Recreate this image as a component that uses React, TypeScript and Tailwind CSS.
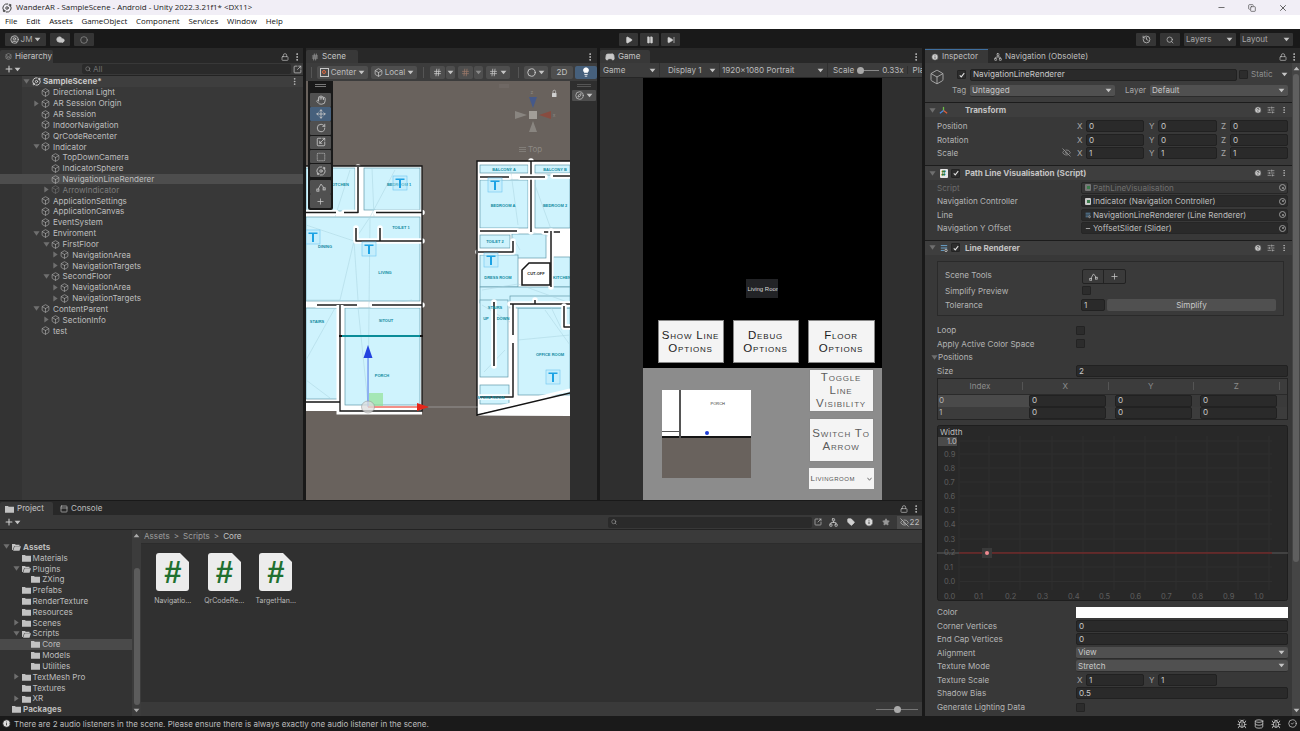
import React from "react";
import {
  Box, Hand, Move, RotateCw, Scaling, SquareDashed, Lock, EllipsisVertical, Plus, Cloud, CircleUser, Play, Pause, SkipForward,
  History, Search, Minus, X, Copy, CircleHelp, SlidersHorizontal, Star, Tag, Bug, EyeOff, Lightbulb, Compass, Gamepad2, Info,
  Network, Hash, Circle, Orbit, CircleCheck, Layers, Database, SquareArrowOutUpRight, PanelTop,
} from "lucide-react";

const Tri = ({ open = false, cls = "" }: { open?: boolean; cls?: string }) => (
  <svg width="7" height="7" viewBox="0 0 8 8" className={"shrink-0 " + cls}>
    {open ? <path d="M0.5 1.5 H7.5 L4 6.5 Z" fill="#6f6f6f" /> : <path d="M1.5 0.5 V7.5 L6.5 4 Z" fill="#6f6f6f" />}
  </svg>
);

const Down = ({ c = "#c4c4c4", cls = "" }: { c?: string; cls?: string }) => (
  <svg width="7" height="5" viewBox="0 0 8 6" className={"shrink-0 " + cls}><path d="M0.5 1 H7.5 L4 5 Z" fill={c} /></svg>
);

const Dots = () => <EllipsisVertical size={10} color="#c4c4c4" strokeWidth={2.2} />;

const Peak = ({ s = 10 }: { s?: number }) => (
  <svg width={s} height={s} viewBox="0 0 12 12" fill="none" stroke="#c8c8c8" strokeWidth="1">
    <path d="M2.500 8.500 L6 2.500 L9.500 7" />
    <rect x="1" y="8.500" width="2.500" height="2.500" />
    <rect x="8.500" y="7" width="2.500" height="2.500" />
  </svg>
);

const FolderIco = ({ open = false }: { open?: boolean }) => (
  <svg width="9" height="8" viewBox="0 0 12 10" className="shrink-0">
    {open ? (
      <path d="M0 1 H4 L5 2 H10 V3.500 H3 L1 9 H0 Z M3.500 4 H12 L10 10 H1.500 Z" fill="#c2c2c2" />
    ) : (
      <path d="M0 1 H4 L5 2 H12 V10 H0 Z" fill="#c2c2c2" />
    )}
  </svg>
);

const Tab = ({ w, children }: { w: string; children: React.ReactNode }) => (
  <div className={"h-[13px] bg-[#383838] rounded-t-[2px] flex items-center gap-[3px] pl-[5px] text-[#c4c4c4] shrink-0 " + w}>{children}</div>
);

const hier: [string, number, "o" | "c" | "", boolean?, boolean?][] = [
  ["Directional Light", 1, ""], ["AR Session Origin", 1, "c"], ["AR Session", 1, ""], ["IndoorNavigation", 1, ""],
  ["QrCodeRecenter", 1, ""], ["Indicator", 1, "o"], ["TopDownCamera", 2, ""], ["IndicatorSphere", 2, ""],
  ["NavigationLineRenderer", 2, "", true], ["ArrowIndicator", 2, "c", false, true], ["ApplicationSettings", 1, ""],
  ["ApplicationCanvas", 1, ""], ["EventSystem", 1, ""], ["Enviroment", 1, "o"], ["FirstFloor", 2, "o"],
  ["NavigationArea", 3, "c"], ["NavigationTargets", 3, "c"], ["SecondFloor", 2, "o"], ["NavigationArea", 3, "c"],
  ["NavigationTargets", 3, "c"], ["ContentParent", 1, "o"], ["SectionInfo", 2, "c"], ["test", 1, ""],
];

const Hierarchy = () => (
  <section className="w-[303px] shrink-0 bg-[#383838] flex flex-col mr-[3px]">
    <div className="h-[15px] bg-[#282828] flex items-end shrink-0">
      <Tab w="w-[53px]"><Layers size={7} color="#a0a0a0" /><span>Hierarchy</span></Tab>
      <div className="ml-auto h-[13px] flex items-center gap-[3px] pr-[1px]"><Lock size={8} color="#c4c4c4" /><Dots /></div>
    </div>
    <div className="h-[13px] flex items-center pl-[4px] pr-[1px] border-b border-[#232323] shrink-0">
      <Plus size={10} color="#d0d0d0" strokeWidth={2.5} /><Down />
      <div className="ml-[61px] flex-1 h-[10px] bg-[#2a2a2a] rounded-[2px] flex items-center pl-[3px] gap-[2px] text-[#6f6f6f]">
        <Search size={6} color="#9a9a9a" /><span>All</span>
      </div>
      <SquareArrowOutUpRight size={9} color="#c4c4c4" className="ml-[2px]" />
    </div>
    <div className="flex-1 flex overflow-hidden">
      <div className="w-[22px] bg-[#333333] shrink-0" />
      <div className="flex-1 flex flex-col">
        <div className="h-[10.830px] bg-[#3e3e3e] flex items-center pl-[1px] gap-[2px] font-bold text-[#c8c8c8] pr-[4px] mb-[0.2px]">
          <Tri open /><Orbit size={9} color="#d8d8d8" strokeWidth={2.4} /><span>SampleScene*</span>
          <span className="ml-auto"><EllipsisVertical size={9} color="#c4c4c4" /></span>
        </div>
        {hier.map(([n, d, a, sel, dim], i) => (
          <div key={i} className={"h-[10.830px] flex items-center shrink-0 " + (sel ? "bg-[#4d4d4d] -ml-[22px] " : "")}
            style={{ paddingLeft: (sel ? 22 : 0) + (d - 1) * 9.6 + 11 }}>
            <span className="w-[8px] shrink-0 flex">{a ? <Tri open={a === "o"} /> : null}</span>
            <Box size={9} strokeWidth={1.4} color={dim ? "#7f7f7f" : "#c8c8c8"} className="shrink-0 mr-[3px]" />
            <span className={dim ? "text-[#7d7d7d]" : "text-[#bdbdbd]"}>{n}</span>
          </div>
        ))}
      </div>
    </div>
  </section>
);

const Wall = ({ d, w = 1.5 }: { d: string; w?: number }) => (
  <g fill="none" strokeLinecap="round" strokeLinejoin="round">
    <path d={d} stroke="#ffffff" strokeWidth={w + 4} />
    <path d={d} stroke="#1c1c1c" strokeWidth={w} strokeLinecap="butt" />
  </g>
);

const TMark = ({ x, y }: { x: number; y: number }) => (
  <g>
    <rect x={x - 7} y={y - 7} width="14" height="14" fill="#b8e8fb" fillOpacity=".45" stroke="#6ec6f2" strokeWidth=".6" />
    <path d={`M${x - 4.5} ${y - 4.5} H${x + 4.5} V${y - 3} H${x + 1} V${y + 5} H${x - 1} V${y - 3} H${x - 4.5} Z`} fill="#1ba2e4" />
  </g>
);

const rooms: [number, number, number, number][] = [
  [306, 168, 355, 211], [364, 168, 420, 210], [306, 217, 420, 301], [306, 308, 338, 399], [345, 308, 420, 405],
  [480, 165, 528, 173], [535, 165, 570, 173], [480, 180, 528, 228], [535, 175, 570, 228], [480, 235, 510, 248],
  [512, 234, 546, 258], [480, 255, 518, 287], [553, 257, 570, 287], [480, 287, 570, 303], [480, 300, 508, 377],
  [518, 308, 570, 395], [480, 385, 509, 404], [510, 296, 570, 308],
];

const labels: [string, number, number][] = [
  ["KITCHEN", 340, 186], ["BEDROOM 1", 399, 186], ["TOILET 1", 401, 229], ["DINING", 325, 248], ["LIVING", 385, 274],
  ["STAIRS", 317, 323], ["SITOUT", 386, 322], ["PORCH", 382, 377], ["BALCONY A", 504, 171], ["BALCONY B", 555, 171],
  ["BEDROOM A", 503, 207], ["BEDROOM 2", 555, 207], ["TOILET 2", 495, 243], ["CUT-OFF", 536, 275], ["DRESS ROOM", 498, 279],
  ["KITCHEN", 562, 279], ["STAIRS", 495, 309], ["UP", 486, 320], ["DOWN", 503, 320], ["OFFICE ROOM", 550, 356], ["STORE ROOM", 491, 399],
];

const FloorPlan = () => (
  <svg viewBox="306 81 264 419" className="w-full h-full block">
    <rect x="306" y="81" width="264" height="419" fill="#69625d" />
    <rect x="306" y="166" width="116" height="245" fill="#fff" />
    <rect x="477" y="161" width="93" height="255" fill="#fff" />
    <path d="M477 416 L570 393 V416 Z" fill="#fff" />
    <path d="M477 415.500 V420 H570 V416 Z" fill="#69625d" />
    {rooms.map(([a, b, c, d], i) => (
      <rect key={i} x={a} y={b} width={c - a} height={d - b} fill="#cff3fd" stroke="#5f98a8" strokeWidth=".7" />
    ))}
    <g stroke="#a9d3df" strokeWidth=".5" fill="none">
      <path d="M306 225 L354 241 L370 217 L368 404 M354 241 L340 300 M354 241 L358 300 M395 170 L370 217 M372 168 L374 217 M350 170 L335 217 M306 300 L340 300 M412 300 L370 307 M358 307 L368 404 M306 380 L330 398 M306 360 L335 308" />
      <path d="M510 165 L518 225 M530 232 L548 236 M482 290 L518 284 L570 303 M482 305 L510 322 M550 305 L562 330 M518 340 L570 335 M545 310 L570 345 M484 372 L505 350 M510 232 L520 250 M535 185 L552 232" />
    </g>
    <Wall d="M306 212.500 H336 M344 212.500 H358 V167 M376 212.500 H422" />
    <Wall d="M356 228 V241 H422 M380 228 V241" />
    <Wall d="M317 305 H357 M372 305 H422" />
    <path d="M340 305 V411 H422" stroke="#fff" strokeWidth="7" fill="none" />
    <rect x="306" y="402" width="34" height="8.500" fill="#fff" />
    <path d="M340 305 V411 H422 V166 H306 M306 402 H340" stroke="#141414" strokeWidth="1.300" fill="none" />
    <path d="M341 336 H421" stroke="#0b8c98" strokeWidth="2" />
    <path d="M339 336 H342 M420 336 H423" stroke="#111" strokeWidth="2" />
    <Wall d="M480 231 H517 M531 161 V232 M544 232 H560" />
    <Wall d="M480 177 H509 M520 177 H545 M553 176 H570" />
    <Wall d="M551 231 V287 M513 241 V252 H478" />
    <Wall d="M535 304 V300 M510 304 H570 M513 304 V335 M513 343 V397 H480" />
    <Wall d="M494 302 V366" w={1.600} />
    <Wall d="M564 306 V327 H570" />
    <path d="M522 270 L529 263 H550 V285 H522 Z" fill="#fff" stroke="#161616" strokeWidth="1.500" />
    <path d="M477 416 V161 H570 M477 415 L570 393" stroke="#141414" strokeWidth="1.400" fill="none" />
    <path d="M482 411 L570 390" stroke="#fff" strokeWidth="3" />
    <g fontFamily="'Liberation Sans',sans-serif" fontSize="4" fontWeight="700" textAnchor="middle">
      {labels.map(([t, x, y], i) => (
        <text key={i} x={x} y={y} fill={t === "CUT-OFF" ? "#222" : "#0f8aa0"}>{t}</text>
      ))}
    </g>
    <TMark x={400} y={183} /><TMark x={313} y={237} /><TMark x={369} y={249} />
    <TMark x={495} y={185} /><TMark x={491} y={260} /><TMark x={553} y={377} />
    <rect x="369" y="393" width="14" height="13" fill="#8fe08f" fillOpacity=".65" />
    <path d="M428 407 H478" stroke="#a9a9a9" strokeWidth=".7" />
    <path d="M368 407 V350" stroke="#5878f0" strokeWidth="1" />
    <path d="M368 345 L372.500 358 H363.500 Z" fill="#2343e0" />
    <path d="M368 407 H418" stroke="#ef6a5f" strokeWidth="1.400" />
    <path d="M429 407 L417 403 V411 Z" fill="#e5261a" />
    <ellipse cx="368" cy="407" rx="6.500" ry="6" fill="#dcdcdc" fillOpacity=".75" stroke="#8b8b8b" strokeWidth=".5" />
    <path d="M499 85 H509 M499 87 H509" stroke="#7b7672" strokeWidth=".7" />
    <g fillOpacity=".9">
      <path d="M533 108 L529 97 H537 Z" fill="#41598f" />
      <path d="M539 115 L551 111 V119 Z" fill="#8c4a3d" />
      <path d="M527 115 L515 111 V119 Z" fill="#8d8a84" />
      <path d="M533 121 L529 132 H537 Z" fill="#8d8a84" />
      <rect x="529" y="111" width="8" height="8" fill="#a8a59f" />
    </g>
    <text x="532" y="94" fontSize="5" fill="#8d8984" textAnchor="middle" fontFamily="Inter">z</text>
    <text x="554" y="117" fontSize="5" fill="#8d8984" textAnchor="middle" fontFamily="Inter">x</text>
    <rect x="552" y="93" width="4.500" height="4" rx=".5" fill="#cfcfcf" />
    <path d="M553 93 V91.500 A1.300 1.300 0 0 1 555.600 91.500 V93" stroke="#cfcfcf" strokeWidth=".7" fill="none" />
    <text x="528" y="152" fontSize="8" fill="#8d8984" fontFamily="Inter">Top</text>
    <path d="M519 147.500 H526 M519 149.500 H526 M519 151.500 H526" stroke="#8d8984" strokeWidth=".7" />
  </svg>
);

const SBtn = ({ w, children, active }: { w: string; children?: React.ReactNode; active?: boolean }) => (
  <div className={"h-[13px] flex items-center justify-center gap-[2px] rounded-[2px] shrink-0 " + w + (active ? " bg-[#46607c]" : " bg-[#4e4e4e]")}>{children}</div>
);

const Sep = () => <div className="w-[1px] h-[11px] bg-[#232323] border-r border-[#555] shrink-0" />;

const tools = [Hand, Move, RotateCw, Scaling, SquareDashed, Orbit];

const Scene = () => (
  <section className="w-[291px] shrink-0 bg-[#282828] flex flex-col mr-[3px]">
    <div className="h-[15px] flex items-end shrink-0">
      <Tab w="w-[52px]"><Hash size={8} color="#b0b0b0" /><span>Scene</span></Tab>
      <div className="ml-auto h-[13px] flex items-center pr-[2px]"><Dots /></div>
    </div>
    <div className="h-[18px] bg-[#3c3c3c] flex items-center pl-[5px] shrink-0">
      <Sep />
      <div className="ml-[5px] flex items-center gap-[3px]">
        <SBtn w="w-[51px]"><span className="w-[9px] h-[9px] border border-[#c8c8c8] flex items-center justify-center"><span className="w-[4px] h-[4px] rounded-full border border-[#e0683e]" /></span><span className="text-[#bdbdbd]">Center</span><Down /></SBtn>
        <SBtn w="w-[46px]"><Box size={9} color="#c8c8c8" /><span className="text-[#bdbdbd]">Local</span><Down /></SBtn>
      </div>
      <div className="ml-[6px] mr-[6px]"><Sep /></div>
      <div className="flex items-center gap-[1px]">
        <SBtn w="w-[15px]"><Hash size={9} color="#d0d0d0" /></SBtn><SBtn w="w-[9px]"><Down /></SBtn>
      </div>
      <div className="flex items-center gap-[1px] ml-[3px]">
        <SBtn w="w-[15px]"><Hash size={9} color="#9c7a6a" /></SBtn><SBtn w="w-[9px]"><Down c="#8a8a8a" /></SBtn>
      </div>
      <div className="ml-[3px]"><SBtn w="w-[24px]"><Hash size={9} color="#c8c8c8" /><Down /></SBtn></div>
      <div className="ml-[8px] mr-[5px]"><Sep /></div>
      <SBtn w="w-[24px]"><Circle size={9} color="#d0d0d0" strokeWidth={2.4} /><Down /></SBtn>
      <div className="ml-[3px]"><SBtn w="w-[22px]"><span className="text-[#c4c4c4]">2D</span></SBtn></div>
      <div className="ml-[2px]"><SBtn w="w-[22px]" active><Lightbulb size={10} color="#fff" fill="#fff" /></SBtn></div>
    </div>
    <div className="flex-1 flex relative overflow-hidden">
      <div className="w-[264px] shrink-0"><FloorPlan /></div>
      <div className="flex-1 bg-[#2e2e2e] flex flex-col items-center pt-[3px]">
        <div className="w-[14px] h-[3px] border-y border-[#555]" />
        <div className="mt-[3px] w-[24px] h-[11px] bg-[#4e4e4e] rounded-[1px] flex items-center justify-center gap-[2px]"><Compass size={9} color="#c4c4c4" /><Down /></div>
      </div>
      <div className="absolute left-[2px] top-0 w-[25px] h-[129px] bg-[#191919] rounded-b-[2px] flex flex-col items-center px-[2px] pt-[3px]">
        <div className="w-[11px] h-[3px] border-y border-[#777] mb-[6px] shrink-0" />
        {tools.map((I, i) => (
          <div key={i} className={"w-[21px] h-[13.500px] mb-[0.7px] rounded-[1px] flex items-center justify-center shrink-0 " + (i === 1 ? "bg-[#46607c]" : "bg-[#505050]")}>
            <I size={10} color="#c8c8c8" />
          </div>
        ))}
        <div className="w-[21px] h-[13.500px] mt-[2px] mb-[0.7px] rounded-[1px] bg-[#505050] flex items-center justify-center shrink-0"><Peak /></div>
        <div className="w-[21px] h-[13.500px] rounded-[1px] bg-[#505050] flex items-center justify-center shrink-0"><Plus size={9} color="#c8c8c8" /></div>
      </div>
    </div>
  </section>
);

const GBtn = ({ t, c = "text-[#1c1c1c]", h = "h-[43px]", w = "w-[66px]" }: { t: string; c?: string; h?: string; w?: string }) => (
  <div className={"bg-[#f4f4f4] border border-[#888] flex items-center justify-center text-center text-[11.500px] leading-[13px] tracking-[0.8px] [font-variant:small-caps] font-['Liberation_Sans',sans-serif] shrink-0 " + c + " " + h + " " + w}>{t}</div>
);

const Game = () => (
  <section className="w-[322px] shrink-0 bg-[#2f2f2f] flex flex-col">
    <div className="h-[15px] bg-[#282828] flex items-end shrink-0">
      <Tab w="w-[50px]"><Gamepad2 size={10} color="#c8c8c8" fill="#c8c8c8" /><span>Game</span></Tab>
      <div className="ml-auto h-[13px] flex items-center pr-[1px]"><Dots /></div>
    </div>
    <div className="h-[15px] bg-[#3c3c3c] flex items-center text-[#bdbdbd] border-b border-[#262626] shrink-0 overflow-hidden whitespace-nowrap">
      <div className="w-[60px] shrink-0 pl-[3px] pr-[3px] flex items-center justify-between border-r border-[#303030] h-full"><span>Game</span><Down /></div>
      <div className="w-[60px] shrink-0 pl-[8px] pr-[3px] flex items-center justify-between border-r border-[#303030] h-full"><span>Display 1</span><Down /></div>
      <div className="w-[108px] shrink-0 pl-[2px] pr-[3px] flex items-center justify-between border-r border-[#303030] h-full"><span>1920x1080 Portrait</span><Down /></div>
      <div className="flex items-center pl-[5px] shrink-0"><span>Scale</span>
        <div className="w-[22px] h-[1px] bg-[#8a8a8a] relative mx-[3px]"><span className="absolute left-0 -top-[3px] w-[7px] h-[7px] rounded-full bg-[#a8a8a8]" /></div>
        <span>0.33x</span></div>
      <div className="pl-[5px] border-l border-[#303030] ml-[3px] shrink-0">Pla</div>
    </div>
    <div className="flex-1 flex justify-center pl-[2px]">
      <div className="w-[239px] flex flex-col">
        <div className="h-[290px] bg-black flex flex-col items-center justify-end pb-[5px]">
          <div className="w-[32px] h-[19px] bg-[#222326] text-[#d8d8d8] text-[6px] whitespace-nowrap overflow-hidden flex items-center pl-[2px] font-['Liberation_Sans',sans-serif] mb-[22px] ml-[-1px]">Living Room</div>
          <div className="flex gap-[9px] self-start pl-[15px]">
            <GBtn t="Show Line Options" /><GBtn t="Debug Options" /><GBtn t="Floor Options" w="w-[67px]" />
          </div>
        </div>
        <div className="flex-1 bg-[#8c8c8c] flex justify-between pr-[8px]">
          <div className="ml-[19px] mt-[22px] w-[89px] h-[88px] bg-[#69625d] flex flex-col">
            <div className="h-[48px] bg-white relative border-b-2 border-[#151515]">
              <div className="absolute left-[17px] top-0 bottom-[-2px] w-[2px] bg-[#555]" />
              <div className="absolute left-0 top-[41px] w-[19px] h-[1px] bg-[#555]" />
              <span className="absolute left-[49px] top-[12px] text-[4px] text-[#333] font-['Liberation_Sans',sans-serif]">PORCH</span>
              <span className="absolute left-[43px] top-[41px] w-[4px] h-[4px] rounded-full bg-[#1f3fd8]" />
            </div>
          </div>
          <div className="flex flex-col pt-[1px]">
            <GBtn t="Toggle Line Visibility" c="text-[#5c5c5c]" w="w-[65px]" />
            <div className="mt-[6px]"><GBtn t="Switch To Arrow" c="text-[#5c5c5c]" h="h-[44px]" w="w-[65px]" /></div>
            <div className="mt-[6px] w-[65px] h-[21px] bg-[#f4f4f4] flex items-center justify-between px-[2px] text-[#555] text-[8px] tracking-[.5px] [font-variant:small-caps] font-['Liberation_Sans',sans-serif]">
              <span>Livingroom</span><svg width="5" height="4" viewBox="0 0 6 4"><path d="M.5 .5 L3 3.500 L5.500 .5" stroke="#555" fill="none" /></svg>
            </div>
          </div>
        </div>
      </div>
    </div>
  </section>
);

const tree: [string, number, "o" | "c" | "", boolean?, boolean?][] = [
  ["Assets", 0, "o", false, true], ["Materials", 1, ""], ["Plugins", 1, "o"], ["ZXing", 2, ""], ["Prefabs", 1, ""],
  ["RenderTexture", 1, ""], ["Resources", 1, ""], ["Scenes", 1, "c"], ["Scripts", 1, "o"], ["Core", 2, "", true],
  ["Models", 2, ""], ["Utilities", 2, ""], ["TextMesh Pro", 1, "c"], ["Textures", 1, ""], ["XR", 1, "c"], ["Packages", 0, "", false, true],
];

const DocIcon = ({ t }: { t: string }) => (
  <div className="w-[51.500px] flex flex-col items-center">
    <div className="relative w-[33px] h-[38px]">
      <svg width="33" height="38" viewBox="0 0 33 38" className="block">
        <path d="M3 0 H24 L33 9 V35 A3 3 0 0 1 30 38 H3 A3 3 0 0 1 0 35 V3 A3 3 0 0 1 3 0 Z" fill="#ececec" />
      </svg>
      <span className="absolute inset-0 flex items-center justify-center text-[#20702f] font-bold text-[31px] leading-none font-['Liberation_Sans',sans-serif]">#</span>
    </div>
    <span className="mt-[6px] text-[7px] text-[#b8b8b8] whitespace-nowrap">{t}</span>
  </div>
);

const Project = () => (
  <section className="mt-[1px] flex-1 bg-[#383838] flex flex-col min-h-0">
    <div className="h-[14px] bg-[#282828] flex items-end shrink-0">
      <Tab w="w-[53px]"><FolderIco /><span>Project</span></Tab>
      <div className="h-[13px] flex items-center gap-[3px] pl-[7px] text-[#bdbdbd]"><PanelTop size={8} color="#c4c4c4" /><span>Console</span></div>
      <div className="ml-auto h-[13px] flex items-center gap-[3px] pr-[1px]"><Lock size={8} color="#c4c4c4" /><Dots /></div>
    </div>
    <div className="h-[15px] bg-[#383838] border-b border-[#232323] flex items-center pl-[4px] shrink-0">
      <Plus size={10} color="#d0d0d0" strokeWidth={2.5} /><Down />
      <div className="ml-[587px] w-[204px] h-[11px] bg-[#2a2a2a] rounded-[2px] flex items-center pl-[3px]"><Search size={6} color="#b0b0b0" /></div>
      <div className="ml-[1px] w-[10px] h-[11px] flex items-center justify-center"><SquareArrowOutUpRight size={8} color="#c4c4c4" /></div>
      <div className="ml-[2px] w-[17.500px] flex justify-center"><Network size={9} color="#d0d0d0" /></div>
      <div className="w-[17.500px] flex justify-center"><Tag size={8} color="#d0d0d0" fill="#d0d0d0" /></div>
      <div className="w-[17.500px] flex justify-center"><Info size={10} color="#333" fill="#d8d8d8" /></div>
      <div className="w-[17.500px] flex justify-center"><Star size={8} color="#999" fill="#999" /></div>
      <div className="ml-[2px] w-[25px] h-[13px] bg-[#4c4c4c] flex items-center justify-center gap-[1px] text-[#bbb]"><EyeOff size={9} color="#bbb" /><span>22</span></div>
    </div>
    <div className="flex-1 flex min-h-0">
      <div className="w-[132px] shrink-0 bg-[#333333] flex flex-col pt-[11.500px] overflow-hidden">
        {tree.map(([n, d, a, sel, b], i) => (
          <div key={i} className={"h-[10.830px] flex items-center shrink-0 " + (sel ? "bg-[#4a4a4a] " : "")} style={{ paddingLeft: 3 + d * 9.6 }}>
            <span className="w-[9px] shrink-0 flex">{a ? <Tri open={a === "o"} /> : null}</span>
            <FolderIco open={a === "o"} />
            <span className={"ml-[2px] text-[#bdbdbd] " + (b ? "font-bold" : "")}>{n}</span>
          </div>
        ))}
      </div>
      <div className="w-[9px] bg-[#3c3c3c] shrink-0 flex flex-col items-center py-[3px]">
        <Down c="#aaa" cls="rotate-180" />
        <div className="mt-[30px] w-[6px] h-[137px] rounded-full bg-[#5c5c5c]" />
        <Down c="#aaa" cls="mt-auto" />
      </div>
      <div className="flex-1 flex flex-col bg-[#303030]">
        <div className="h-[14px] bg-[#3a3a3a] flex items-center gap-[4px] pl-[3px] text-[#9c9c9c] shrink-0 border-b border-[#2c2c2c]">
          <span>Assets</span><span>&gt;</span><span>Scripts</span><span>&gt;</span><span className="text-[#c4c4c4]">Core</span>
        </div>
        <div className="flex-1 flex pl-[6px] pt-[9px]">
          <DocIcon t="Navigatio..." /><DocIcon t="QrCodeRe..." /><DocIcon t="TargetHan..." />
        </div>
        <div className="h-[14px] bg-[#3a3a3a] flex items-center justify-end pr-[4px] shrink-0">
          <div className="w-[42px] h-[1px] bg-[#777] relative"><span className="absolute left-[18px] -top-[3px] w-[7px] h-[7px] rounded-full bg-[#aaa]" /></div>
        </div>
      </div>
    </div>
  </section>
);

const Check = ({ on = true }: { on?: boolean }) => (
  <span className="w-[9px] h-[9px] bg-[#2c2c2c] border border-[#232323] rounded-[1px] flex items-center justify-center shrink-0">
    {on ? <svg width="6" height="6" viewBox="0 0 8 8"><path d="M1 4.500 L3 6.500 L7 1.500" stroke="#e0e0e0" strokeWidth="1.400" fill="none" /></svg> : null}
  </span>
);

const Row = ({ label, children, dim, h = "h-[13.540px]" }: { label: string; children?: React.ReactNode; dim?: boolean; h?: string }) => (
  <div className={"flex items-center pl-[12px] pr-[4px] shrink-0 " + h}>
    <span className={"w-[139px] shrink-0 " + (dim ? "text-[#6c6c6c]" : "text-[#b4b4b4]")}>{label}</span>
    <div className="flex-1 flex items-center min-w-0">{children}</div>
  </div>
);

const Field = ({ v = "", cls = "flex-1" }: { v?: string; cls?: string }) => (
  <div className={"h-[12px] bg-[#2a2a2a] border border-[#212121] rounded-[2px] pl-[2px] flex items-center text-[#c8c8c8] " + cls}>{v}</div>
);

const Axis = ({ a, cls = "" }: { a: string; cls?: string }) => <span className={"w-[10px] pl-[1px] text-[#a8a8a8] shrink-0 " + cls}>{a}</span>;

const Vec = ({ v, link }: { v: [string, string, string]; link?: boolean }) => (
  <div className="flex items-center w-full relative">
    {link ? <span className="absolute -left-[14px] top-[1px]"><EyeOff size={9} color="#999" /></span> : null}
    <Axis a="X" /><Field v={v[0]} cls="w-[58px]" />
    <Axis a="Y" cls="ml-[4px]" /><Field v={v[1]} cls="w-[59px]" />
    <Axis a="Z" cls="ml-[3px]" /><Field v={v[2]} cls="flex-1" />
  </div>
);

const CompHead = ({ icon, title, check = true }: { icon: React.ReactNode; title: string; check?: boolean }) => (
  <div className="h-[15px] border-t border-[#1c1c1c] bg-[#3e3e3e] flex items-center pl-[4px] pr-[4px] shrink-0">
    <Tri open />
    <span className="ml-[3px] w-[9px] flex justify-center">{icon}</span>
    {check ? <span className="ml-[3px]"><Check /></span> : <span className="w-[12px]" />}
    <span className="ml-[5px] font-bold text-[#c4c4c4]">{title}</span>
    <span className="ml-auto flex items-center gap-[5px]">
      <CircleHelp size={8} color="#333" fill="#c8c8c8" /><SlidersHorizontal size={8} color="#b4b4b4" /><EllipsisVertical size={8} color="#c4c4c4" />
    </span>
  </div>
);

const Obj = ({ icon, t, dim }: { icon: React.ReactNode; t: string; dim?: boolean }) => (
  <div className={"flex-1 h-[12px] border border-[#262626] rounded-[2px] flex items-center pl-[3px] pr-[1px] gap-[2px] ml-[5px] " + (dim ? "bg-[#363636] text-[#707070]" : "bg-[#2a2a2a] text-[#bdbdbd]")}>
    <span className="w-[6px] flex justify-center shrink-0">{icon}</span><span className="whitespace-nowrap">{t}</span>
    <span className="ml-auto w-[7px] h-[7px] rounded-full border border-[#9a9a9a] flex items-center justify-center"><span className="w-[2px] h-[2px] rounded-full bg-[#9a9a9a]" /></span>
  </div>
);

const ScriptIco = ({ c = "#c8c8c8" }: { c?: string }) => <span className="w-[6px] h-[7px] rounded-[1px] flex items-center justify-center shrink-0" style={{ background: c }}><span className="w-[3px] h-[3px] bg-[#3a7a4a]" /></span>;

const LineIco = () => (
  <svg width="8" height="8" viewBox="0 0 10 10" fill="none" stroke="#6fb0e0" strokeWidth="1.100"><path d="M1 2 H9 M1 5 H9 M1 8 H5" /><circle cx="7.500" cy="8" r="1.500" stroke="#c8c8c8" /></svg>
);

const Drop = ({ t }: { t: string }) => (
  <div className="flex-1 h-[12px] bg-[#505050] rounded-[2px] border-b border-[#2c2c2c] flex items-center justify-between pl-[2px] pr-[3px] text-[#c8c8c8]"><span>{t}</span><Down /></div>
);

const Graph = () => {
  const ys: [string, number][] = [["1.0", 441], ["0.9", 454], ["0.8", 468], ["0.7", 482], ["0.6", 496], ["0.5", 510], ["0.4", 524], ["0.3", 539], ["0.2", 552.5], ["0.1", 567], ["0.0", 581.5]];
  const xs = [949, 979, 1010, 1042, 1073, 1104, 1135, 1166, 1197, 1228, 1259];
  return (
    <svg viewBox="937 425 351 176" className="w-full h-[176px] block">
      <rect x="937.500" y="425.500" width="350" height="175" rx="2" fill="#282828" stroke="#1e1e1e" />
      <rect x="938" y="437" width="19" height="9" fill="#4a4a4a" />
      {xs.map((x, i) => <path key={i} d={`M${x + 10} 436 V590`} stroke="#2f2f2f" strokeWidth="1" />)}
      {ys.map(([, y], i) => <path key={i} d={`M960 ${y} H1272`} stroke="#2f2f2f" strokeWidth="1" />)}
      <path d="M937 553 H959 M1272 553 H1288" stroke="#6a6a6a" strokeWidth=".8" />
      <path d="M959 553 H1272" stroke="#a02828" strokeWidth=".9" />
      <rect x="982" y="548" width="10" height="10" fill="#3a3a3a" />
      <circle cx="987" cy="553" r="2" fill="#f08a90" />
      <g fontFamily="Inter" fontSize="7.500" fill="#5e5e5e">
        {ys.map(([t, y], i) => <text key={i} x={i === 0 ? 947 : 944} y={y + 2.5} fill={i === 0 ? "#c0c0c0" : "#5e5e5e"}>{t}</text>)}
        {xs.map((x, i) => <text key={i} x={x - 5} y={599}>{(i / 10).toFixed(1)}</text>)}
      </g>
      <text x="940" y="435" fontFamily="Inter" fontSize="8.100" fill="#bdbdbd">Width</text>
    </svg>
  );
};

const Inspector = () => (
  <section className="flex-1 ml-[3px] bg-[#383838] flex flex-col min-w-0">
    <div className="h-[15px] bg-[#282828] flex items-end shrink-0">
      <div className="w-[63px] h-[14px] bg-[#383838] border-t border-[#3f6f9f] flex items-center gap-[3px] pl-[6px] text-[#bdbdbd] shrink-0"><Info size={8} color="#333" fill="#d0d0d0" /><span>Inspector</span></div>
      <div className="h-[13px] flex items-center gap-[3px] pl-[6px] text-[#bdbdbd]"><Network size={8} color="#c8c8c8" /><span>Navigation (Obsolete)</span></div>
      <div className="ml-auto h-[13px] flex items-center gap-[2px] pr-[1px]"><Lock size={8} color="#c4c4c4" /><Dots /></div>
    </div>
    <div className="flex-1 flex min-h-0">
      <div className="flex-1 min-w-0 flex flex-col overflow-hidden">
        <div className="h-[39px] bg-[#3c3c3c] flex shrink-0 pl-[4px] pt-[5px]">
          <Box size={16} color="#c8c8c8" strokeWidth={1.1} className="mt-[1px] shrink-0" />
          <div className="flex-1 flex flex-col pl-[2px] pr-[4px] gap-[3.500px] min-w-0">
            <div className="flex items-center h-[13px]">
              <span className="ml-[10px]"><Check /></span>
              <div className="ml-[4px] w-[267px] h-[12px] bg-[#2a2a2a] border border-[#212121] rounded-[2px] pl-[2px] flex items-center text-[#c8c8c8] shrink-0">NavigationLineRenderer</div>
              <span className="ml-[2px]"><Check on={false} /></span>
              <span className="ml-[3px] text-[#8f8f8f]">Static</span>
              <span className="ml-auto"><Down /></span>
            </div>
            <div className="flex items-center h-[12px]">
              <span className="ml-[5px] w-[18px] text-[#a8a8a8] shrink-0">Tag</span>
              <div className="w-[145px] flex shrink-0"><Drop t="Untagged" /></div>
              <span className="ml-[10px] w-[25px] text-[#a8a8a8] shrink-0">Layer</span>
              <div className="flex-1 flex"><Drop t="Default" /></div>
            </div>
          </div>
        </div>
        <CompHead icon={
          <svg width="9" height="9" viewBox="0 0 10 10" strokeWidth="1.400" fill="none"><path d="M5 5 V1" stroke="#6fc04a" /><path d="M5 5 L9 8" stroke="#e0603a" /><path d="M5 5 L1 8" stroke="#4a8be0" /></svg>
        } title="Transform" check={false} />
        <div className="pt-[2.500px] pb-[5px] flex flex-col shrink-0">
          <Row label="Position"><Vec v={["0", "0", "0"]} /></Row>
          <Row label="Rotation"><Vec v={["0", "0", "0"]} /></Row>
          <Row label="Scale"><Vec v={["1", "1", "1"]} link /></Row>
        </div>
        <CompHead icon={<span className="w-[8px] h-[9px] bg-[#e8e8e8] rounded-[1px] text-[#20702f] text-[7px] leading-[9px] text-center font-bold">#</span>} title="Path Line Visualisation (Script)" />
        <div className="pt-[1px] pb-[4.700px] flex flex-col shrink-0">
          <Row label="Script" dim><Obj dim icon={<ScriptIco c="#777" />} t="PathLineVisualisation" /></Row>
          <Row label="Navigation Controller"><Obj icon={<ScriptIco />} t="Indicator (Navigation Controller)" /></Row>
          <Row label="Line"><Obj icon={<LineIco />} t="NavigationLineRenderer (Line Renderer)" /></Row>
          <Row label="Navigation Y Offset"><Obj icon={<Minus size={7} color="#c8c8c8" strokeWidth={3} />} t="YoffsetSlider (Slider)" /></Row>
        </div>
        <CompHead icon={<LineIco />} title="Line Renderer" />
        <div className="ml-[12px] mt-[6.500px] mr-[8px] h-[55px] border border-[#2a2a2a] bg-[#3a3a3a] px-[7px] flex flex-col justify-start pt-[7px] shrink-0">
          <div className="flex items-start h-[15px]">
            <span className="w-[137px] text-[#b4b4b4] mt-[2px]">Scene Tools</span>
            <div className="flex h-[15px] border border-[#222] rounded-[2px] bg-[#3a3a3a]"><span className="w-[21px] border-r border-[#222] flex items-center justify-center"><Peak s={9} /></span><span className="w-[21px] flex items-center justify-center"><Plus size={9} color="#c8c8c8" /></span></div>
          </div>
          <div className="flex items-center h-[13px]"><span className="w-[137px] text-[#b4b4b4]">Simplify Preview</span><Check on={false} /></div>
          <div className="flex items-center h-[14px] pt-[1px]">
            <span className="w-[136px] text-[#b4b4b4]">Tolerance</span>
            <Field v="1" cls="w-[24px]" />
            <div className="ml-[2px] flex-1 h-[12px] bg-[#505050] rounded-[2px] flex items-center justify-center text-[#c8c8c8]">Simplify</div>
          </div>
        </div>
        <div className="mt-[7px] flex flex-col shrink-0">
          <Row label="Loop"><Check on={false} /></Row>
          <Row label="Apply Active Color Space"><Check on={false} /></Row>
          <div className="h-[13.540px] flex items-center pl-[6px] text-[#b4b4b4]"><Tri open /><span>Positions</span></div>
          <Row label="Size"><Field v="2" /></Row>
        </div>
        <div className="ml-[12px] mr-[4px] h-[42px] border border-[#242424] flex flex-col shrink-0 bg-[#3c3c3c]">
          <div className="h-[16px] grid grid-cols-[85px_85.500px_85.500px_85.500px_1fr] items-center text-center text-[#8c8c8c] border-b border-[#2a2a2a] shrink-0">
            <span className="border-r border-[#555]">Index</span><span className="border-r border-[#555]">X</span><span className="border-r border-[#555]">Y</span><span className="border-r border-[#555]">Z</span><span />
          </div>
          {["0", "1"].map((n, i) => (
            <div key={n} className={"h-[12px] flex items-center " + (i === 0 ? "bg-[#3a3a3a]" : "")}>
              <span className={"w-[91px] pl-[1px] text-[#b4b4b4] h-full flex items-center " + (i === 0 ? "bg-[#4a4a4a]" : "")}>{n}</span>
              <Field v="0" cls="w-[77px]" />
              <span className="w-[9px]" /><Field v="0" cls="w-[77px]" />
              <span className="w-[8px]" /><Field v="0" cls="w-[77px]" />
            </div>
          ))}
        </div>
        <div className="ml-[12px] mr-[4px] mt-[5px] shrink-0"><Graph /></div>
        <div className="mt-[5px] flex flex-col shrink-0">
          <Row label="Color"><div className="h-[11px] w-full bg-white" /></Row>
          <Row label="Corner Vertices"><Field v="0" /></Row>
          <Row label="End Cap Vertices"><Field v="0" /></Row>
          <Row label="Alignment"><Drop t="View" /></Row>
          <Row label="Texture Mode"><Drop t="Stretch" /></Row>
          <Row label="Texture Scale">
            <Axis a="X" /><Field v="1" cls="w-[58px]" /><Axis a="Y" cls="ml-[4px]" /><Field v="1" cls="w-[59px]" />
          </Row>
          <Row label="Shadow Bias"><Field v="0.5" /></Row>
          <Row label="Generate Lighting Data"><Check on={false} /></Row>
          <Row label=""><Check on={false} /></Row>
        </div>
      </div>
      <div className="w-[8px] bg-[#454545] shrink-0 flex flex-col items-center py-[3px]">
        <Down c="#bbb" cls="rotate-180" />
        <div className="mt-[3px] w-[6px] h-[488px] rounded-full bg-[#5f5f5f]" />
        <Down c="#bbb" cls="mt-auto" />
      </div>
    </div>
  </section>
);

const TopBtn = ({ w, children }: { w: string; children: React.ReactNode }) => (
  <div className={"h-[13px] bg-[#353535] rounded-[1px] flex items-center justify-center gap-[2px] text-[#a8a8a8] shrink-0 " + w}>{children}</div>
);

export default function App() {
  return (
    <div className="w-[1300px] h-[731px] bg-[#191919] flex flex-col overflow-hidden font-['Inter',sans-serif] text-[8.100px] leading-none">
      <header className="h-[15px] bg-[#f1eef6] flex items-center pl-[2px] text-[#222] font-['Open_Sans',sans-serif] shrink-0">
        <Orbit size={10} color="#444" strokeWidth={2.4} />
        <span className="ml-[4px] text-[7.900px]">WanderAR - SampleScene - Android - Unity 2022.3.21f1* &lt;DX11&gt;</span>
        <div className="ml-auto flex items-center gap-[22px] pr-[12px]">
          <Minus size={9} color="#444" /><Copy size={8} color="#444" /><X size={10} color="#444" />
        </div>
      </header>
      <nav className="h-[14px] bg-white flex items-center pl-[5px] gap-[8.800px] text-[#111] text-[7.900px] font-['Open_Sans',sans-serif] shrink-0">
        {["File", "Edit", "Assets", "GameObject", "Component", "Services", "Window", "Help"].map((m) => <span key={m}>{m}</span>)}
      </nav>
      <div className="h-[19px] bg-[#191919] flex items-center pl-[5px] pr-[7px] pt-[2px] shrink-0">
        <TopBtn w="w-[41px]"><CircleUser size={9} color="#c8c8c8" fill="#555" /><span>JM</span><Down /></TopBtn>
        <div className="ml-[4px]"><TopBtn w="w-[20px]"><Cloud size={9} color="#c8c8c8" fill="#c8c8c8" /></TopBtn></div>
        <div className="ml-[4px]"><TopBtn w="w-[20px]"><Circle size={8} color="#999" /></TopBtn></div>
        <div className="ml-[525px] flex gap-[2px]">
          <TopBtn w="w-[19px]"><Play size={8} color="#d0d0d0" fill="#d0d0d0" /></TopBtn>
          <TopBtn w="w-[19px]"><Pause size={8} color="#d0d0d0" fill="#d0d0d0" /></TopBtn>
          <TopBtn w="w-[19px]"><SkipForward size={8} color="#d0d0d0" fill="#d0d0d0" /></TopBtn>
        </div>
        <div className="ml-auto flex gap-[4px]">
          <TopBtn w="w-[20px]"><History size={9} color="#c8c8c8" /></TopBtn>
          <TopBtn w="w-[20px]"><Search size={8} color="#c8c8c8" /></TopBtn>
          <TopBtn w="w-[52px]"><span className="mr-auto pl-[2px]">Layers</span><span className="pr-[3px]"><Down /></span></TopBtn>
          <TopBtn w="w-[53px]"><span className="mr-auto pl-[2px]">Layout</span><span className="pr-[3px]"><Down /></span></TopBtn>
        </div>
      </div>
      <main className="flex-1 flex min-h-0">
        <div className="w-[922px] shrink-0 flex flex-col">
          <div className="h-[452px] flex shrink-0"><Hierarchy /><Scene /><Game /></div>
          <Project />
        </div>
        <Inspector />
      </main>
      <footer className="h-[15px] bg-[#1a1a1a] flex items-center pl-[2px] pr-[3px] text-[#bdbdbd] text-[8px] shrink-0">
        <Info size={9} color="#222" fill="#e0e0e0" />
        <span className="ml-[3px]">There are 2 audio listeners in the scene. Please ensure there is always exactly one audio listener in the scene.</span>
        <div className="ml-auto flex items-center gap-[7px]">
          <Bug size={10} color="#c8c8c8" /><Database size={10} color="#c8c8c8" /><Bug size={10} color="#c8c8c8" /><CircleCheck size={9} color="#c8c8c8" />
        </div>
      </footer>
    </div>
  );
}
